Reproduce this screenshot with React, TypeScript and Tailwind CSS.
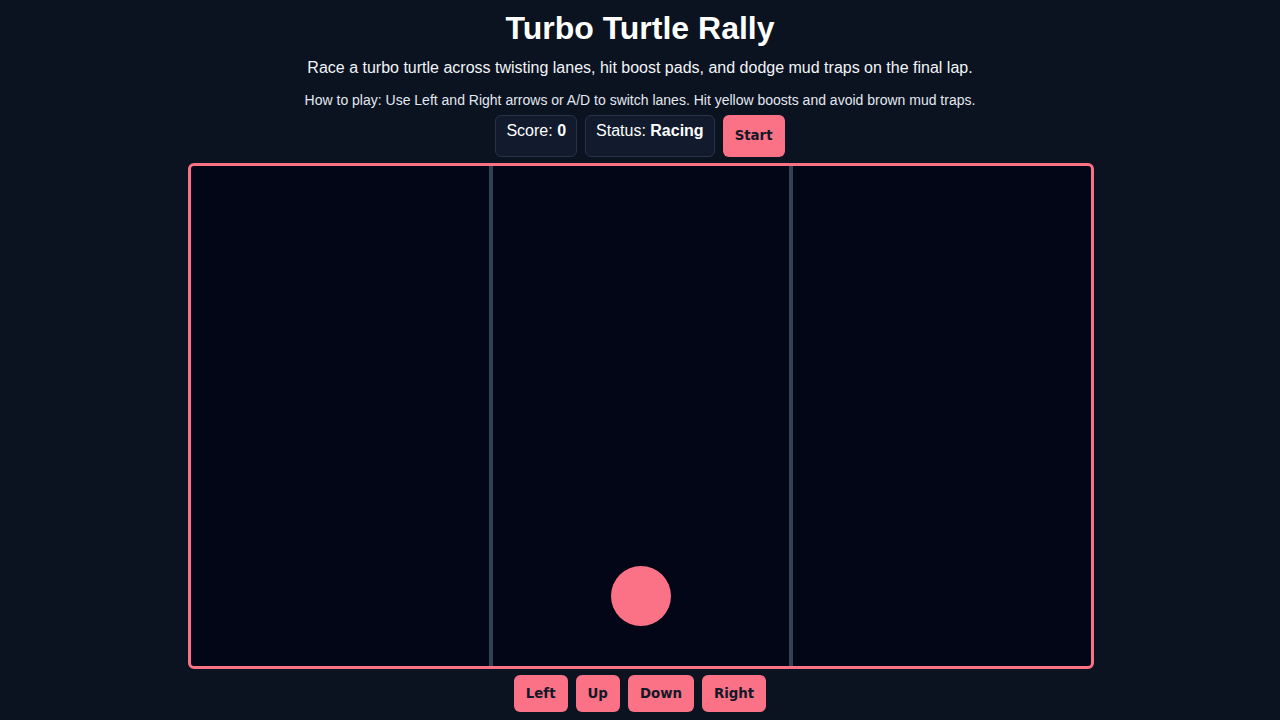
import { useState } from 'react';

export default function App() {
  const [score] = useState(0);
  const [status] = useState('Racing');
  const [lane, setLane] = useState(1);

  const laneLeft = ['left-[120px]', 'left-[420px]', 'left-[720px]'];
  const btn = "rounded-md bg-[#fb7185] font-['DejaVu_Sans',sans-serif] text-[13.333px] font-bold text-[#111827] px-[12px]";

  return (
    <div className="min-h-screen bg-[#0b1220] font-['Liberation_Sans',Arial,sans-serif] text-white flex flex-col items-center pt-[10px]">
      <h1 className="text-[32px] leading-[37px] font-bold text-white">Turbo Turtle Rally</h1>
      <p className="mt-[12px] text-[16px] leading-[18px] text-[#f1f5f9]">
        Race a turbo turtle across twisting lanes, hit boost pads, and dodge mud traps on the final lap.
      </p>
      <p className="mt-[15px] text-[14px] leading-[16px] text-[#e2e8f0]">
        How to play: Use Left and Right arrows or A/D to switch lanes. Hit yellow boosts and avoid brown mud traps.
      </p>

      {/* Stats row */}
      <div className="mt-[7px] flex gap-2">
        <div className="h-[42px] px-[10px] pt-[6px] rounded-md border border-[#283347] bg-[#111b2d] text-[16px] leading-[18px]">
          Score: <strong className="font-bold">{score}</strong>
        </div>
        <div className="h-[42px] px-[10px] pt-[6px] rounded-md border border-[#283347] bg-[#111b2d] text-[16px] leading-[18px]">
          Status: <strong className="font-bold">{status}</strong>
        </div>
        <button className={`h-[42px] ${btn}`}>Start</button>
      </div>

      {/* Track */}
      <div className="mt-[6px] ml-[2px] w-[906px] h-[506px] border-[3px] border-[#fb7185] rounded-[6px] bg-[#020617] relative flex">
        <div className="w-[298px] h-full" />
        <div className="w-[4px] h-full bg-[#334155]" />
        <div className="w-[296px] h-full" />
        <div className="w-[4px] h-full bg-[#334155]" />
        <div className="w-[298px] h-full" />
        <div className={`absolute top-[400px] ${laneLeft[lane]} w-[60px] h-[60px] rounded-full bg-[#fb7185]`} />
      </div>

      {/* Controls */}
      <div className="mt-[6px] flex gap-2">
        <button onClick={() => setLane(Math.max(0, lane - 1))} className={`h-[37px] ${btn}`}>
          Left
        </button>
        <button className={`h-[37px] ${btn}`}>Up</button>
        <button className={`h-[37px] ${btn}`}>Down</button>
        <button onClick={() => setLane(Math.min(2, lane + 1))} className={`h-[37px] ${btn}`}>
          Right
        </button>
      </div>
    </div>
  );
}
